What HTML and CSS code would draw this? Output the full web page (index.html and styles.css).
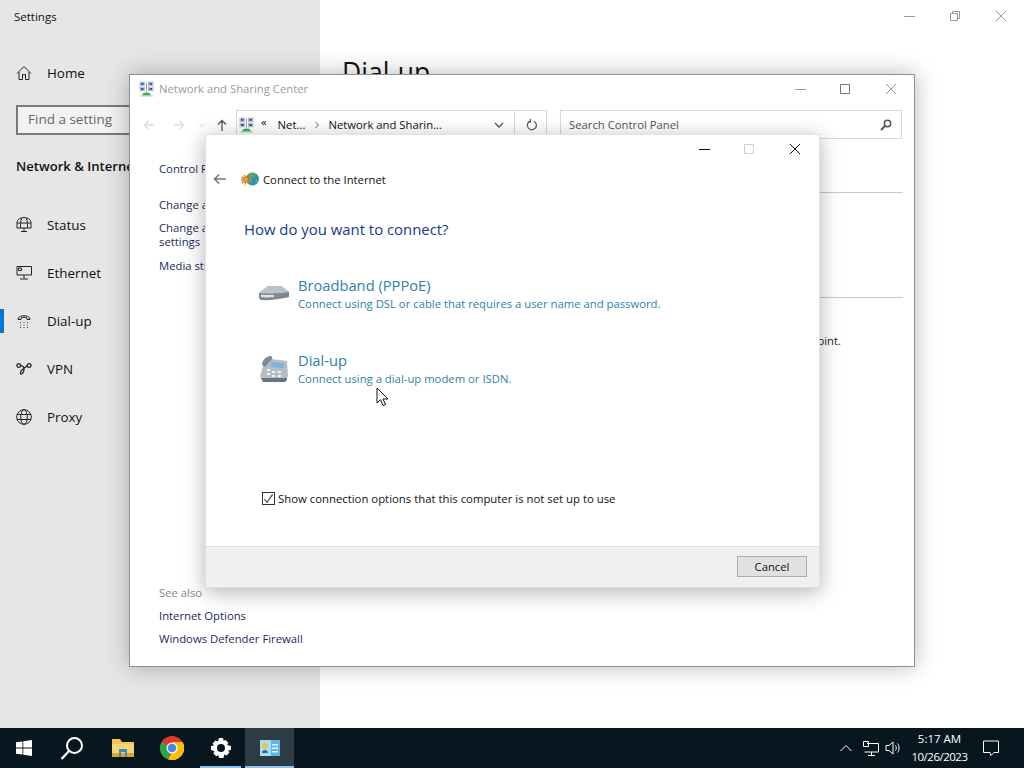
FILE: index.html
```html
<!DOCTYPE html>
<html lang="en">
<head>
    <meta charset="UTF-8">
    <title>Connect to the Internet</title>
    <link rel="stylesheet" href="styles.css">
</head>
<body>
    <svg class="defs" width="0" height="0">
        <symbol id="net-icon" viewBox="0 0 16 16">
            <rect x="1" y="0.5" width="5" height="4" fill="#dfe6ee" stroke="#8a99aa" stroke-width="0.6"/>
            <rect x="2" y="1.5" width="3" height="2" fill="#2c4f9e"/>
            <rect x="10" y="0.5" width="5" height="4" fill="#dfe6ee" stroke="#8a99aa" stroke-width="0.6"/>
            <rect x="11" y="1.5" width="3" height="2" fill="#2c4f9e"/>
            <rect x="1" y="6" width="5" height="4" fill="#dfe6ee" stroke="#8a99aa" stroke-width="0.6"/>
            <rect x="2" y="7" width="3" height="2" fill="#2c4f9e"/>
            <rect x="10" y="6" width="5" height="4" fill="#dfe6ee" stroke="#8a99aa" stroke-width="0.6"/>
            <rect x="11" y="7" width="3" height="2" fill="#2c4f9e"/>
            <path d="M8 1v11" stroke="#7d8c99" stroke-width="0.8"/>
            <path d="M5 12h6l2 3H3z" fill="#3fae5c"/>
            <rect x="1" y="15" width="14" height="1" fill="#9fd6ad"/>
        </symbol>
    </svg>

    <div class="screen">
        <!-- settings app behind everything -->
        <div class="settings">
            <aside class="settings-side">
                <div class="settings-title">Settings</div>
                <div class="side-row home-row">
                    <svg class="side-icon" viewBox="0 0 16 16" fill="none" stroke="#222" stroke-width="1">
                        <path d="M1 8.500 8 1.500l7 7M3 7v7.500h3.500v-5h3v5H13V7"/>
                    </svg>
                    <span>Home</span>
                </div>
                <div class="find-box">Find a setting</div>
                <div class="side-heading">Network &amp; Internet</div>
                <nav class="side-nav">
                    <div class="side-row">
                        <svg class="side-icon" viewBox="0 0 16 16" fill="none" stroke="#222" stroke-width="1">
                            <path d="M1 11V5.500a7 5 0 0 1 14 0V11zM1 6h14M5.500 1.500C4.500 4 4.500 8 4.500 11M10.500 1.500c1 2.500 1 6.500 1 9.500M8 11v3M5 14.500h6"/>
                        </svg>
                        <span>Status</span>
                    </div>
                    <div class="side-row">
                        <svg class="side-icon" viewBox="0 0 16 16" fill="none" stroke="#222" stroke-width="1">
                            <path d="M1 1.500h14.500V10H1zM8 10v3.500M4 14h8M2.500 3h3v2.500h-3z"/>
                        </svg>
                        <span>Ethernet</span>
                    </div>
                    <div class="side-row active">
                        <svg class="side-icon" viewBox="0 0 16 16" fill="none" stroke="#222" stroke-width="1">
                            <path d="M2 6.500c-.5-5 12.500-5 12 0h-3V5c-1.500-1-4.500-1-6 0v1.500z"/>
                            <path d="M4 9.500h1M7.500 9.500h1M11 9.500h1M4 12h1M7.500 12h1M11 12h1M4 14.500h1M7.500 14.500h1M11 14.500h1" stroke="#444"/>
                        </svg>
                        <span>Dial-up</span>
                    </div>
                    <div class="side-row">
                        <svg class="side-icon" viewBox="0 0 16 16" fill="none" stroke="#222" stroke-width="1.200">
                            <circle cx="2.800" cy="4.500" r="1.900"/>
                            <circle cx="13.200" cy="4.500" r="1.900"/>
                            <path d="M4.700 4.500c2.500.5 3.500 2 3.300 4-.2 2-1 4-2.500 4.500-1.500.3-1.500-2 0-3.500 1.800-1.800 4-3 5.800-5"/>
                        </svg>
                        <span>VPN</span>
                    </div>
                    <div class="side-row">
                        <svg class="side-icon" viewBox="0 0 16 16" fill="none" stroke="#222" stroke-width="1">
                            <circle cx="8" cy="8" r="7.300"/>
                            <ellipse cx="8" cy="8" rx="3.300" ry="7.300"/>
                            <path d="M1 5.500h14M1 10.500h14"/>
                        </svg>
                        <span>Proxy</span>
                    </div>
                </nav>
            </aside>
            <main class="settings-main">
                <div class="settings-controls">
                    <svg class="ctl" viewBox="0 0 12 12" stroke="#999"><path d="M1 6.500h11"/></svg>
                    <svg class="ctl" viewBox="0 0 12 12" fill="none" stroke="#999"><path d="M1.500 3.500h7v7h-7zM3.500 3.500v-2h7v7h-2"/></svg>
                    <svg class="ctl" viewBox="0 0 12 12" stroke="#999"><path d="M1 1l10 10M11 1 1 11"/></svg>
                </div>
                <h1 class="settings-h1">Dial-up</h1>
            </main>
        </div>

        <!-- network and sharing center -->
        <section class="nsc">
            <header class="nsc-title">
                <svg class="small-icon"><use href="#net-icon"/></svg>
                <span class="nsc-name">Network and Sharing Center</span>
                <div class="nsc-controls">
                    <svg class="ctl" viewBox="0 0 12 12" stroke="#999"><path d="M1 6.500h11"/></svg>
                    <svg class="ctl" viewBox="0 0 12 12" fill="none" stroke="#777"><path d="M1.500 1.500h9v9h-9z"/></svg>
                    <svg class="ctl" viewBox="0 0 12 12" stroke="#999"><path d="M1 1l10 10M11 1 1 11"/></svg>
                </div>
            </header>
            <div class="nsc-toolbar">
                <div class="nav-arrows">
                    <svg class="arrow" viewBox="0 0 12 12" fill="none" stroke="#ddd" stroke-width="1.300"><path d="M11 6H1.500M5.500 2 1.500 6l4 4"/></svg>
                    <svg class="arrow" viewBox="0 0 12 12" fill="none" stroke="#ddd" stroke-width="1.300"><path d="M1 6h9.500M6.500 2l4 4-4 4"/></svg>
                    <svg class="arrow-down" viewBox="0 0 8 8" fill="none" stroke="#ddd"><path d="M1 2.500 4 5.500l3-3"/></svg>
                    <svg class="arrow" viewBox="0 0 12 12" fill="none" stroke="#555" stroke-width="1.300"><path d="M6 12V1.500M2 5.500l4-4 4 4"/></svg>
                </div>
                <div class="crumbs">
                    <svg class="small-icon"><use href="#net-icon"/></svg>
                    <span class="crumb-more">&laquo;</span>
                    <span class="crumb-a">Net...</span>
                    <svg class="crumb-sep" viewBox="0 0 6 8" fill="none" stroke="#666"><path d="M1.500 1l3 3-3 3"/></svg>
                    <span class="crumb-b">Network and Sharin...</span>
                    <svg class="crumb-drop" viewBox="0 0 10 6" fill="none" stroke="#555" stroke-width="1.300"><path d="M1 1l4 4 4-4"/></svg>
                    <div class="crumb-refresh">
                        <svg viewBox="0 0 12 12" width="12" height="12" fill="none" stroke="#555" stroke-width="1.200"><path d="M4 2.200a4.500 4.500 0 1 0 4 .1M4.500 0v2.800H1.800"/></svg>
                    </div>
                </div>
                <div class="nsc-search">
                    <span>Search Control Panel</span>
                    <svg viewBox="0 0 12 12" width="12" height="12" fill="none" stroke="#555" stroke-width="1.500"><circle cx="7.500" cy="4.500" r="3.200"/><path d="M5 7 1 11" stroke-width="2"/></svg>
                </div>
            </div>
            <div class="nsc-body">
                <aside class="nsc-side">
                    <div class="nsc-links">
                        <a class="cp-home">Control Panel Home</a>
                        <a>Change adapter settings</a>
                        <a>Change advanced sharing<br>settings</a>
                        <a>Media streaming options</a>
                    </div>
                    <div class="nsc-links see-also">
                        <div class="see-label">See also</div>
                        <a>Internet Options</a>
                        <a>Windows Defender Firewall</a>
                    </div>
                </aside>
                <div class="nsc-main">
                    <div class="nsc-line first"></div>
                    <div class="nsc-line"></div>
                    <p class="nsc-text">Set up a broadband, dial-up, or VPN connection; or set up a router or access point.</p>
                </div>
            </div>
        </section>

        <!-- wizard dialog -->
        <section class="dialog">
            <div class="dialog-controls">
                <svg class="ctl" viewBox="0 0 12 12" stroke="#111"><path d="M1 6.500h11"/></svg>
                <svg class="ctl" viewBox="0 0 12 12" fill="none" stroke="#ccc"><path d="M1.500 1.500h9v9h-9z"/></svg>
                <svg class="ctl" viewBox="0 0 12 12" stroke="#111"><path d="M1 1l10 10M11 1 1 11"/></svg>
            </div>
            <div class="dialog-head">
                <svg class="back" viewBox="0 0 14 12" fill="none" stroke="#777" stroke-width="1.500"><path d="M13 6H1.500M6 1.500 1.500 6 6 10.500"/></svg>
                <svg class="globe" viewBox="0 0 18 16">
                    <circle cx="11.500" cy="8" r="6.500" fill="#2f8fb8"/>
                    <path d="M9 3c2-1 5-1 6 1l-2 2-3 1 1 3-2 2-2-3zM15 9l2-1-1 4-2 0z" fill="#5fae4e"/>
                    <circle cx="4.500" cy="8.500" r="3" fill="#eb9a34" stroke="#a8600f" stroke-width="0.600"/>
                    <circle cx="4.500" cy="8.500" r="4.300" fill="none" stroke="#d9862a" stroke-width="1.400" stroke-dasharray="1.500 1.500"/>
                </svg>
                <span>Connect to the Internet</span>
            </div>
            <div class="dialog-content">
                <h2 class="question">How do you want to connect?</h2>
                <div class="option broadband">
                    <svg class="option-icon" viewBox="0 0 32 32">
                        <path d="M1 16 10 9h13l8 6v5L3 23 1 21z" fill="#8e9aa1"/>
                        <path d="M10 9h13l8 6c-10 2-20 2-30 1z" fill="#b9c3c8"/>
                        <path d="M1 16c10 1 20 1 30-1v5c-9 2.500-20 3.500-28 3l-2-2z" fill="#7d8a92"/>
                        <path d="M3 17.500c4 .5 8 .7 13 .5v2c-5 .5-9 .5-13 0z" fill="#dbe5e9"/>
                    </svg>
                    <div class="option-text">
                        <div class="option-name">Broadband (PPPoE)</div>
                        <div class="option-desc">Connect using DSL or cable that requires a user name and password.</div>
                    </div>
                </div>
                <div class="option dialup">
                    <svg class="option-icon" viewBox="0 0 32 32">
                        <path d="M2 24 5 14l9-7 15 2 1 15-3 6H5z" fill="#b4bec4"/>
                        <path d="M4 13c0-4 3-8 8-9 2 0 3 1 2 3l-7 8z" fill="#7d8990"/>
                        <path d="M13 10l13 1v5l-13-1z" fill="#7fb2d6"/>
                        <path d="M9 17h3v2H9zM9 21h3v2H9zM14 19h3v2h-3zM14 23h3v2h-3zM20 19h3v2h-3zM20 23h3v2h-3z" fill="#eef2f4"/>
                        <path d="M3 26h26v2l-2 2H5z" fill="#69757c"/>
                    </svg>
                    <div class="option-text">
                        <div class="option-name">Dial-up</div>
                        <div class="option-desc">Connect using a dial-up modem or ISDN.</div>
                    </div>
                </div>
            </div>
            <label class="show-all">
                <span class="check">
                    <svg viewBox="0 0 12 12" width="11" height="11" fill="none" stroke="#333" stroke-width="1.100"><path d="M1.500 6.500 4.500 10l6-8.500"/></svg>
                </span>
                Show connection options that this computer is not set up to use
            </label>
            <footer class="dialog-foot">
                <button class="cancel-btn">Cancel</button>
            </footer>
        </section>

        <svg class="cursor" viewBox="0 0 13 20" width="13" height="20">
            <path d="M1 1v15l3.500-3.300L7 18.500l2.500-1L7 12h5z" fill="#fff" stroke="#111" stroke-width="1"/>
        </svg>

        <!-- taskbar -->
        <div class="taskbar">
            <div class="task-item">
                <svg viewBox="0 0 16 16" width="16" height="16" fill="#fff"><path d="M0 2.300 6.500 1.400V7.600H0zM7.300 1.300 16 0V7.600H7.300zM0 8.400h6.500v6.200L0 13.700zM7.300 8.400H16V16L7.300 14.700z"/></svg>
            </div>
            <div class="task-item">
                <svg viewBox="0 0 24 24" width="24" height="24" fill="none" stroke="#fff" stroke-width="2"><circle cx="14.500" cy="9.500" r="7.500"/><path d="M9 15 1.500 23" stroke-width="2.400"/></svg>
            </div>
            <div class="task-item pinned first-pin">
                <svg viewBox="0 0 24 20" width="24" height="20">
                    <path d="M1 1h8l2 3h12v15H1z" fill="#f1c453"/>
                    <path d="M1 6h22v13H1z" fill="#f6d774"/>
                    <rect x="1" y="15" width="22" height="4" fill="#d9a62e"/>
                    <path d="M8 11h8v8h-2v-5h-4v5H8z" fill="#3e8bc9"/>
                </svg>
            </div>
            <div class="task-item pinned">
                <svg viewBox="0 0 24 24" width="24" height="24">
                    <circle cx="12" cy="12" r="12" fill="#e0382e"/>
                    <path d="M12 12 1.600 6A12 12 0 0 0 8 23.300z" fill="#2fa04c"/>
                    <path d="M12 6h10.600A12 12 0 0 1 8 23.300L13 14z" fill="#f4c20d"/>
                    <circle cx="12" cy="12" r="5.500" fill="#fff"/>
                    <circle cx="12" cy="12" r="4.300" fill="#4a86e8"/>
                </svg>
            </div>
            <div class="task-item pinned open">
                <svg viewBox="0 0 20 20" width="20" height="20"><path fill="#fff" fill-rule="evenodd" d="M8 0h4l.5 2.800 2-.9 2.800 2.800-1.100 2.300L19.900 8v4l-2.700.5 1.100 2.300-2.800 2.800-2.300-1.100L12.500 20h-4.500l-.5-2.800-2.300 1.100-2.800-2.800 1.100-2.300L0 12V8l2.800-.5-1.100-2.300 2.800-2.800 2.300 1.100zM10 6a4 4 0 1 0 0 8 4 4 0 0 0 0-8z"/></svg>
            </div>
            <div class="task-item pinned open current">
                <svg viewBox="0 0 20 16" width="20" height="16">
                    <rect width="20" height="16" fill="#5cb6ea"/>
                    <path d="M0 0h11v16H0z" fill="#a9dcf5"/>
                    <circle cx="5" cy="6" r="3" fill="#e8c93c"/>
                    <path d="M2 13c0-4 6-4 6 0z" fill="#2c6ea3"/>
                    <path d="M12 4h6v1.500h-6zM12 7.500h6V9h-6zM12 11h6v1.500h-6z" fill="#eaf6fd"/>
                </svg>
            </div>
            <div class="tray">
                <svg class="chevron" viewBox="0 0 12 8" width="12" height="8" fill="none" stroke="#fff"><path d="M.5 7 6 1.500 11.500 7"/></svg>
                <svg viewBox="0 0 16 15" width="16" height="15" fill="none" stroke="#fff"><path d="M4 2.500h11.500V11H1.500M8.500 11v3M5 14.500h7M.5.500h5v5h-5z"/></svg>
                <svg viewBox="0 0 16 14" width="16" height="14" fill="none" stroke="#fff"><path d="M1 4.500h3L8 1v12L4 9.500H1zM10.500 4.500c1 1.500 1 3.500 0 5M12.500 2.500c2 2.500 2 6.500 0 9" /></svg>
                <div class="clock">
                    <div>5:17 AM</div>
                    <div class="clock-date">10/26/2023</div>
                </div>
                <svg viewBox="0 0 16 16" width="16" height="16" fill="none" stroke="#fff"><path d="M.5 1h15v11.500h-4.500L8 15.500l-1-3H.5z"/></svg>
            </div>
        </div>
    </div>
</body>
</html>
```

FILE: styles.css
```css
* {
    margin: 0;
    padding: 0;
    box-sizing: border-box;
}

body {
    width: 1024px;
    height: 768px;
    overflow: hidden;
    background: #fff;
    font-family: 'Open Sans', 'Liberation Sans', sans-serif;
    font-size: 11.300px;
    color: #111;
}

.defs {
    position: absolute;
}

.screen {
    position: relative;
    width: 1024px;
    height: 768px;
    display: flex;
    flex-direction: column;
    overflow: hidden;
}

/* settings app */
.settings {
    flex: 1;
    display: flex;
    min-height: 0;
}

.settings-side {
    width: 320px;
    background: #e6e6e6;
    padding-top: 9px;
}

.settings-title {
    padding-left: 14px;
    font-size: 11.500px;
    line-height: 16px;
    margin-bottom: 32px;
}

.side-row {
    display: flex;
    align-items: center;
    height: 48px;
    padding-left: 16px;
    font-size: 13.400px;
    position: relative;
}

.side-row.active::before {
    content: '';
    position: absolute;
    left: 0;
    top: 12px;
    width: 4px;
    height: 24px;
    background: #0078d7;
}

.side-icon {
    width: 16px;
    height: 16px;
    margin-right: 15px;
    flex: none;
}

.home-row {
    height: 32px;
}

.find-box {
    width: 240px;
    height: 30px;
    margin: 16px 0 0 16px;
    border: 2px solid #7a7a7a;
    background: #f2f2f2;
    padding-left: 10px;
    line-height: 25px;
    font-size: 13.500px;
    color: #666;
}

.side-heading {
    margin: 20px 0 0 16px;
    font-size: 13.100px;
    font-weight: 600;
    line-height: 22px;
    white-space: nowrap;
}

.side-nav {
    margin-top: 24px;
}

.settings-main {
    flex: 1;
    padding: 0 17px 0 22px;
}

.settings-controls {
    display: flex;
    justify-content: flex-end;
    gap: 34px;
    padding-top: 10px;
}

.ctl {
    width: 12px;
    height: 12px;
    flex: none;
}

.settings-h1 {
    margin-top: 31px;
    font-size: 26.500px;
    font-weight: 400;
    line-height: 38px;
}

/* network and sharing center */
.nsc {
    position: absolute;
    left: 129px;
    top: 74px;
    width: 786px;
    height: 593px;
    background: #fff;
    border: 1px solid #8f8f8f;
    box-shadow: 0 0 22px rgba(0, 0, 0, 0.28);
    display: flex;
    flex-direction: column;
}

.nsc-title {
    display: flex;
    align-items: center;
    height: 28px;
    padding: 0 17px 0 9px;
    color: #999;
}

.nsc-title .small-icon {
    margin-right: 5px;
}

.nsc-name {
    margin-top: -2px;
}

.small-icon {
    width: 15px;
    height: 16px;
    flex: none;
}

.nsc-controls {
    margin-left: auto;
    display: flex;
    gap: 34px;
}

.nsc-controls .ctl:first-child {
    margin-right: -1px;
}

.nsc-toolbar {
    display: flex;
    align-items: center;
    height: 29px;
    margin-top: 7px;
    padding-right: 12px;
}

.nav-arrows {
    display: flex;
    align-items: center;
    width: 106px;
    padding-left: 13px;
    gap: 18px;
}

.arrow {
    width: 12px;
    height: 12px;
}

.arrow-down {
    width: 8px;
    height: 8px;
    margin: 0 -8px 0 -5px;
}

.crumbs {
    width: 311px;
    height: 29px;
    border: 1px solid #d9d9d9;
    display: flex;
    align-items: center;
    padding-left: 2px;
    position: relative;
}

.crumb-more {
    margin-left: 7px;
    line-height: 12px;
    padding-bottom: 5px;
}

.crumb-a {
    margin-left: 11px;
}

.crumb-sep {
    width: 6px;
    height: 8px;
    margin: 0 8px 0 9px;
}

.crumb-drop {
    width: 10px;
    height: 6px;
    margin-left: auto;
    margin-right: 10px;
}

.crumb-refresh {
    width: 32px;
    height: 100%;
    border-left: 1px solid #d9d9d9;
    display: flex;
    align-items: center;
    justify-content: center;
    padding-left: 3px;
}

.nsc-search {
    margin-left: 13px;
    flex: 1;
    height: 29px;
    border: 1px solid #d9d9d9;
    display: flex;
    align-items: center;
    justify-content: space-between;
    padding: 0 9px 0 8px;
    color: #555;
}

.nsc-body {
    flex: 1;
    display: flex;
    min-height: 0;
}

.nsc-side {
    width: 200px;
    padding: 23px 0 20px 29px;
    display: flex;
    flex-direction: column;
    justify-content: space-between;
    white-space: nowrap;
}

.nsc-links {
    display: flex;
    flex-direction: column;
    gap: 9.500px;
    line-height: 14px;
    color: #1a2a5c;
}

.nsc-links .cp-home {
    margin-bottom: 12px;
}

.see-also {
    gap: 9px;
}

.see-label {
    color: #888;
}

.nsc-main {
    flex: 1;
    padding-right: 11px;
}

.nsc-line {
    height: 1px;
    background: #c8c8c8;
    margin-top: 104px;
}

.nsc-line.first {
    margin-top: 53px;
}

.nsc-text {
    margin-top: 35px;
    text-align: right;
    padding-right: 62px;
    white-space: nowrap;
    color: #222;
}

/* wizard */
.dialog {
    position: absolute;
    left: 205px;
    top: 134px;
    width: 615px;
    height: 454px;
    background: #fff;
    border: 1px solid #e2e2e2;
    box-shadow: 0 4px 20px rgba(0, 0, 0, 0.3);
    display: flex;
    flex-direction: column;
}

.dialog-controls {
    display: flex;
    justify-content: flex-end;
    gap: 34px;
    padding: 8px 18px 0 0;
    height: 27px;
}

.dialog-controls .ctl:first-child {
    margin-right: -1px;
}

.dialog-head {
    display: flex;
    align-items: center;
    height: 20px;
    margin-top: 7px;
    padding-left: 7px;
}

.back {
    width: 14px;
    height: 12px;
    margin-right: 14px;
}

.globe {
    width: 18px;
    height: 16px;
    margin-right: 4px;
}

.dialog-content {
    flex: 1;
    padding: 30px 0 0 38px;
}

.question {
    font-size: 14.900px;
    font-weight: 400;
    line-height: 20px;
    color: #153a8a;
}

.option {
    display: flex;
    align-items: center;
    margin-left: 14px;
    height: 40px;
}

.broadband {
    margin-top: 34px;
}

.dialup {
    margin-top: 35px;
}

.option-icon {
    width: 32px;
    height: 32px;
    margin-right: 8px;
}

.option-name {
    font-size: 14.700px;
    line-height: 21px;
    color: #2f7fa8;
}

.option-desc {
    font-size: 11.300px;
    line-height: 15px;
    color: #2f7fa8;
    white-space: nowrap;
}

.show-all {
    display: flex;
    align-items: center;
    gap: 3px;
    height: 16px;
    margin: 0 0 40px 56px;
    font-size: 11.350px;
}

.check {
    width: 13px;
    height: 13px;
    border: 1px solid #333;
    display: flex;
    align-items: center;
    justify-content: center;
    background: #fff;
}

.dialog-foot {
    height: 41px;
    background: #f0f0f0;
    border-top: 1px solid #dfdfdf;
    display: flex;
    justify-content: flex-end;
    align-items: center;
    padding: 0 12px 2px 0;
}

.cancel-btn {
    width: 70px;
    height: 21px;
    background: #e1e1e1;
    border: 1px solid #adadad;
    font: inherit;
    color: #111;
}

.cursor {
    position: absolute;
    left: 376px;
    top: 387px;
}

/* taskbar */
.taskbar {
    height: 40px;
    flex: none;
    background: #08161f;
    display: flex;
    align-items: stretch;
}

.task-item {
    width: 48px;
    display: flex;
    align-items: center;
    justify-content: center;
    position: relative;
}

.task-item.pinned {
    width: 49px;
}

.task-item.first-pin {
    margin-left: 2px;
}

.task-item.open::after {
    content: '';
    position: absolute;
    left: 4px;
    right: 4px;
    bottom: 0;
    height: 2px;
    background: #8cc4ee;
}

.task-item.current {
    background: #2d3b45;
}

.task-item.current::after {
    left: 0;
    right: 0;
}

.tray {
    margin-left: auto;
    display: flex;
    align-items: center;
    color: #fff;
    padding-right: 25px;
    gap: 6px;
}

.chevron {
    margin-right: 5px;
}

.clock {
    width: 67px;
    margin: 0 4px 0 -1px;
    text-align: center;
    line-height: 18px;
    font-size: 11.500px;
}

.clock-date {
    letter-spacing: -0.5px;
}
```
